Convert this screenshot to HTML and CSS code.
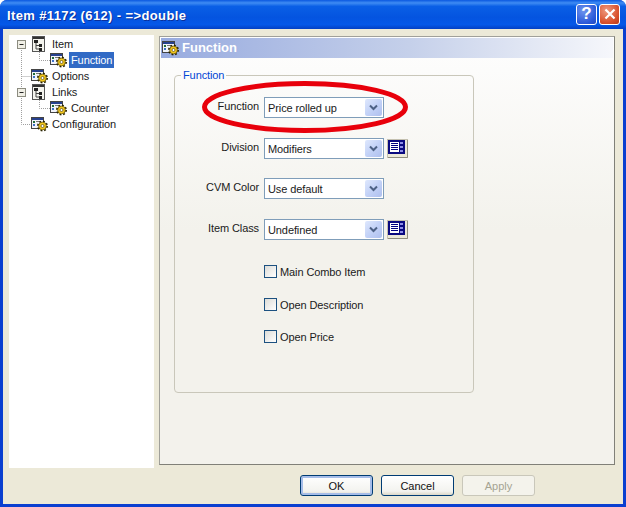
FILE: index.html
```html
<!DOCTYPE html>
<html lang="en">
<head>
<meta charset="utf-8">
<title>Item #1172 (612)</title>
<link rel="stylesheet" href="styles.css">
</head>
<body>
<svg class="defs" width="0" height="0" aria-hidden="true">
  <symbol id="i-tree" viewBox="0 0 17 17">
    <rect x="1.500" y="0.500" width="12" height="15" fill="#f4f4ee" stroke="#555"/>
    <rect x="2" y="1" width="11" height="2" fill="#333"/>
    <path d="M5 6V13H9M5 9.500H9" fill="none" stroke="#444"/>
    <rect x="3" y="4" width="4" height="3" fill="#222"/>
    <rect x="8" y="8" width="3" height="3" fill="#222"/>
    <rect x="8" y="12" width="3" height="3" fill="#222"/>
  </symbol>
  <symbol id="i-gear" viewBox="0 0 17 17">
    <rect x="0.500" y="1.500" width="12" height="11" fill="#f2f4fa" stroke="#444"/>
    <rect x="1" y="2" width="11" height="2" fill="#27418f"/>
    <rect x="2" y="5" width="2" height="2" fill="#1f6b3a"/>
    <rect x="2" y="8" width="2" height="2" fill="#3c70c8"/>
    <rect x="5" y="5" width="4" height="1" fill="#777"/>
    <circle cx="11.500" cy="10" r="4.600" fill="none" stroke="#2a2400" stroke-width="1.800" stroke-dasharray="1.800 1.800"/>
    <circle cx="11.500" cy="10" r="3.900" fill="#f4c81e" stroke="#3a3000" stroke-width=".6"/>
    <circle cx="11.500" cy="10" r="1.500" fill="#fff" stroke="#3a3000" stroke-width=".6"/>
  </symbol>
  <symbol id="i-chev" viewBox="0 0 9 7">
    <path d="M1 1.500L4.500 5L8 1.500" fill="none" stroke="#4d6185" stroke-width="2"/>
  </symbol>
  <symbol id="i-list" viewBox="0 0 21 19">
    <rect x="0.500" y="0.500" width="20" height="18" fill="#ece9d8" stroke="#c4c1b0"/>
    <path d="M20.500 1V18.500H1" fill="none" stroke="#8f8d7e"/>
    <rect x="1" y="1" width="17" height="14" fill="#0a0a80"/>
    <rect x="3" y="3" width="9" height="10" fill="#fff"/>
    <path d="M4 4.500h7M4 6.500h7M4 8.500h7M4 10.500h7" stroke="#000080" stroke-width="1"/>
    <rect x="13" y="3" width="3" height="2" fill="#8f8fe8"/>
    <rect x="13" y="7" width="3" height="2" fill="#8f8fe8"/>
    <rect x="13" y="11" width="3" height="2" fill="#8f8fe8"/>
  </symbol>
</svg>

<div class="window">
  <header class="titlebar">
    <span class="title">Item #1172 (612) - =&gt;double</span>
    <span class="caption-btn help">?</span>
    <span class="caption-btn close">
      <svg width="14" height="14" viewBox="0 0 14 14"><path d="M2.500 2.500L11.500 11.500M11.500 2.500L2.500 11.500" stroke="#fff" stroke-width="2.200"/></svg>
    </span>
  </header>

  <div class="client">
    <div class="main">
      <nav class="tree">
        <svg class="tree-lines" width="60" height="110" viewBox="0 0 60 110" aria-hidden="true">
          <path d="M12.500 9V89.500H22M12.500 41.500H22M30.500 17V25.500H41M30.500 65V73.500H41" fill="none" stroke="#a0a0a0" stroke-dasharray="1 1"/>
          <g fill="#f0efe6" stroke="#8c8c80">
            <rect x="8.500" y="5.500" width="8" height="8"/>
            <rect x="8.500" y="53.500" width="8" height="8"/>
          </g>
          <path d="M10.500 9.500H14.500M10.500 57.500H14.500" stroke="#222"/>
        </svg>
        <div class="node"><svg class="ico"><use href="#i-tree"/></svg><span class="node-label">Item</span></div>
        <div class="node sub"><svg class="ico"><use href="#i-gear"/></svg><span class="node-label selected">Function</span></div>
        <div class="node"><svg class="ico"><use href="#i-gear"/></svg><span class="node-label">Options</span></div>
        <div class="node"><svg class="ico"><use href="#i-tree"/></svg><span class="node-label">Links</span></div>
        <div class="node sub"><svg class="ico"><use href="#i-gear"/></svg><span class="node-label">Counter</span></div>
        <div class="node"><svg class="ico"><use href="#i-gear"/></svg><span class="node-label">Configuration</span></div>
      </nav>

      <section class="panel">
        <h2 class="panel-head"><svg class="ico"><use href="#i-gear"/></svg><span class="panel-title">Function</span></h2>
        <fieldset class="group">
          <legend>Function</legend>
          <div class="group-body">
            <div class="field gap-20">
              <span class="field-label">Function</span>
              <div class="select"><span class="select-text">Price rolled up</span><span class="arrow"><svg width="9" height="7"><use href="#i-chev"/></svg></span></div>
            </div>
            <div class="field gap-19">
              <span class="field-label">Division</span>
              <div class="select"><span class="select-text">Modifiers</span><span class="arrow"><svg width="9" height="7"><use href="#i-chev"/></svg></span></div>
              <svg class="list-btn"><use href="#i-list"/></svg>
            </div>
            <div class="field gap-20">
              <span class="field-label">CVM Color</span>
              <div class="select"><span class="select-text">Use default</span><span class="arrow"><svg width="9" height="7"><use href="#i-chev"/></svg></span></div>
            </div>
            <div class="field gap-25">
              <span class="field-label">Item Class</span>
              <div class="select"><span class="select-text">Undefined</span><span class="arrow"><svg width="9" height="7"><use href="#i-chev"/></svg></span></div>
              <svg class="list-btn"><use href="#i-list"/></svg>
            </div>
            <div class="check gap-20"><span class="box"></span>Main Combo Item</div>
            <div class="check gap-19"><span class="box"></span>Open Description</div>
            <div class="check"><span class="box"></span>Open Price</div>
          </div>
        </fieldset>
      </section>
    </div>

    <footer class="footer">
      <button class="btn default">OK</button>
      <button class="btn">Cancel</button>
      <button class="btn" disabled>Apply</button>
    </footer>
  </div>

  <svg class="highlight" width="210" height="56" viewBox="0 0 210 56" aria-hidden="true">
    <ellipse cx="105" cy="27" rx="100.500" ry="23.500" fill="none" stroke="#e8000b" stroke-width="5"/>
  </svg>
</div>
</body>
</html>
```
FILE: styles.css
```css
* { box-sizing: border-box; }
html, body { margin: 0; padding: 0; }
body { font: 11px "Liberation Sans", Arial, sans-serif; letter-spacing: -.1px; color: #1a1a1a; background: #fff; overflow: hidden; }
.defs { position: absolute; }

.window {
  position: relative;
  width: 626px;
  height: 507px;
  display: flex;
  flex-direction: column;
  background: #0a3fd0;
  border-radius: 7px 7px 0 0;
  overflow: hidden;
}

.titlebar {
  height: 29px;
  flex: none;
  display: flex;
  align-items: center;
  padding: 0 6px 1px 7px;
  background: linear-gradient(180deg, #0a58e0 0%, #3f8cf3 10%, #0a5fe6 22%, #0454e0 60%, #0558e8 85%, #0340c4 100%);
}
.title { flex: 1; padding-top: 2px; color: #fff; font-size: 13px; font-weight: bold; letter-spacing: .38px; text-shadow: 1px 1px 0 #0a2f9a; }
.caption-btn {
  width: 21px;
  height: 21px;
  margin-left: 2px;
  border: 1px solid #fff;
  border-radius: 3px;
  display: flex;
  align-items: center;
  justify-content: center;
  color: #fff;
  font-size: 17px;
  font-weight: bold;
}
.help { background: radial-gradient(circle at 35% 30%, #6f95ee, #2a58d8 70%, #2048c0); }
.close { background: radial-gradient(circle at 35% 30%, #ee9a80, #d9512c 65%, #b83a1a); }

.client {
  flex: 1;
  margin: 0 3px 3px;
  background: #ece9d8;
  display: flex;
  flex-direction: column;
}
.main { display: flex; align-items: flex-start; height: 439px; }

.tree {
  position: relative;
  width: 145px;
  height: 433px;
  margin: 6px 0 0 6px;
  padding-top: 1px;
  background: #fff;
}
.tree-lines { position: absolute; left: 0; top: 0; }
.node { position: relative; display: flex; align-items: center; height: 16px; padding-left: 22px; }
.node.sub { padding-left: 41px; }
.ico { width: 17px; height: 17px; flex: none; }
.node-label { margin-left: 2px; padding: 2px 2px 1px; line-height: 13px; }
.node-label.selected { background: #316ac5; color: #fff; }

.panel {
  width: 456px;
  height: 429px;
  margin: 7px 0 0 5px;
  padding: 1px;
  background: linear-gradient(180deg, #fefefe 0%, #f3f2ec 45%, #f3f2ec 100%);
  border: 1px solid #a0a09a;
  border-right-color: #808078;
  border-bottom-color: #808078;
}
.panel-head {
  display: flex;
  align-items: center;
  gap: 3px;
  height: 20px;
  margin: 0;
  padding-left: 1px;
  color: #fff;
  font-size: 13px;
  font-weight: bold;
  letter-spacing: 0;
  background: linear-gradient(90deg, #98abdf 0%, #c5d0ea 55%, #f6f7fb 100%);
}
.panel-title { padding-bottom: 2px; }

.group {
  width: 300px;
  height: 324px;
  margin: 11px 0 0 13px;
  padding: 0;
  border: 1px solid #c9c7ba;
  border-radius: 4px;
}
.group legend { margin-left: 6px; padding: 0 2px; color: #0046d5; line-height: 13px; }
.group-body { padding: 15px 0 0 89px; }

.field { display: flex; align-items: center; height: 21px; }
.gap-19 { margin-bottom: 19px; }
.gap-20 { margin-bottom: 20px; }
.gap-25 { margin-bottom: 25px; }
.field-label { margin-left: -89px; width: 89px; padding: 0 5px 3px 0; text-align: right; flex: none; }

.select {
  width: 120px;
  height: 21px;
  display: flex;
  align-items: center;
  justify-content: space-between;
  background: #fff;
  border: 1px solid #7f9db9;
  padding: 1px;
  flex: none;
}
.select-text { padding-left: 2px; }
.arrow {
  width: 17px;
  height: 17px;
  display: flex;
  align-items: center;
  justify-content: center;
  border-radius: 2px;
  background: linear-gradient(135deg, #dfe8fd 0%, #c3d2f7 50%, #aebfee 100%);
}
.list-btn { width: 21px; height: 19px; margin-left: 3px; flex: none; }

.check { display: flex; align-items: center; height: 13px; white-space: nowrap; }
.box { width: 13px; height: 13px; margin-right: 3px; border: 1px solid #1c5180; background: linear-gradient(135deg, #dcdcd7, #fff); flex: none; }

.footer { display: flex; gap: 8px; padding: 0 88px 0 0; justify-content: flex-end; margin-top: 7px; }
.btn {
  width: 73px;
  height: 21px;
  padding: 0;
  font: 11px "Liberation Sans", Arial, sans-serif;
  color: #111;
  border: 1px solid #003c74;
  border-radius: 3px;
  background: linear-gradient(180deg, #fff 0%, #f3f3ef 80%, #dcd8c8 100%);
}
.btn.default { box-shadow: inset 0 0 0 2px #a6bde8; }
.btn:disabled { color: #a5a392; border-color: #c9c7ba; background: #f4f3ec; }

.highlight { position: absolute; left: 200px; top: 80px; }
```
